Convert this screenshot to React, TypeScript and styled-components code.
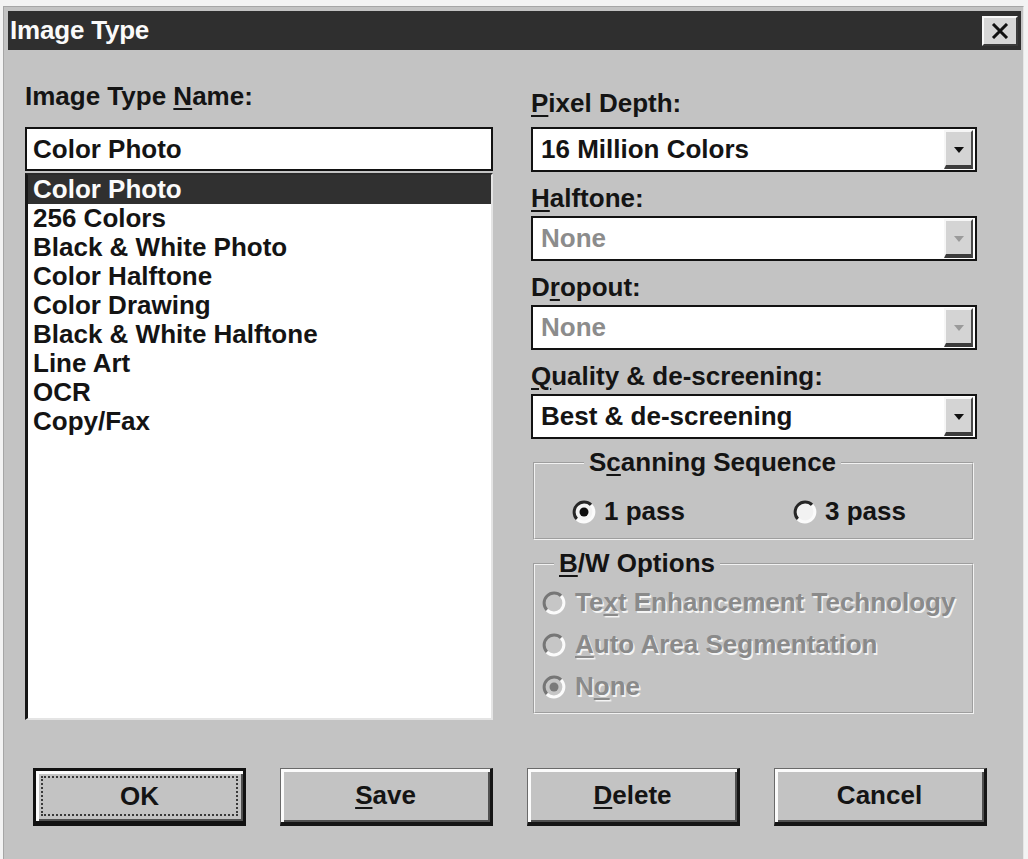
import React from "react";
import styled, { createGlobalStyle } from "styled-components";

const Global = createGlobalStyle`
  html, body { margin: 0; padding: 0; background: #f3f3f3; }
  body {
    font-family: "Liberation Sans", Arial, Helvetica, sans-serif;
    font-weight: 700;
    color: #141414;
    overflow: hidden;
  }
  * { box-sizing: border-box; }
`;

const FS = "26px";

const Window = styled.div`
  margin: 6px 4px 0 3px;
  height: 853px;
  border-left: 1px solid #a6a6a6;
  border-top: 1px solid #a6a6a6;
  border-right: 1px solid #e6e6e6;
  background: #c3c3c3;
  padding: 4px 2px 0 4px;
  display: flex;
  flex-direction: column;
`;

const TitleBar = styled.div`
  height: 39px;
  background: #2f2f2f;
  color: #fafafa;
  display: flex;
  align-items: center;
  justify-content: space-between;
  padding-left: 2px;
  font-size: 26px;
  letter-spacing: -0.2px;
`;

const CloseButton = styled.div`
  width: 36px;
  height: 30px;
  margin-right: 3px;
  background: #d6d6d6;
  border: 2px solid;
  border-color: #f7f7f7 #3a3a3a #3a3a3a #f7f7f7;
  display: flex;
  align-items: center;
  justify-content: center;
`;

const Body = styled.div`
  display: grid;
  grid-template-columns: 468px 446px;
  column-gap: 38px;
  padding-left: 17px;
`;

const Column = styled.div`
  display: flex;
  flex-direction: column;
`;

const FieldLabel = styled.div<{ $pt: number; $pb: number }>`
  font-size: ${FS};
  line-height: 29px;
  padding-top: ${(p) => p.$pt}px;
  margin-bottom: ${(p) => p.$pb}px;
  white-space: nowrap;
`;

const Key = styled.span`
  text-decoration: underline;
  text-decoration-thickness: 2px;
  text-underline-offset: 3px;
`;

const TextField = styled.div`
  height: 44px;
  border: 2px solid #121212;
  background: #ffffff;
  padding-left: 6px;
  font-size: ${FS};
  line-height: 40px;
  white-space: nowrap;
`;

const ListBox = styled.ul`
  list-style: none;
  margin: 2px 0 0 0;
  padding: 0;
  height: 547px;
  background: #ffffff;
  border-left: 3px solid #161616;
  border-top: 2px solid #2a2a2a;
  border-right: 2px solid #e4e4e4;
  border-bottom: 2px solid #e4e4e4;
  overflow: hidden;
`;

const ListItem = styled.li<{ $selected?: boolean }>`
  height: 29px;
  line-height: 29px;
  padding-left: 5px;
  font-size: ${FS};
  white-space: nowrap;
  background: ${(p) => (p.$selected ? "#303030" : "transparent")};
  color: ${(p) => (p.$selected ? "#fbfbfb" : "#141414")};
`;

const Combo = styled.div`
  height: 45px;
  border: 2px solid #121212;
  background: #ffffff;
  display: flex;
  align-items: stretch;
`;

const ComboText = styled.div<{ $disabled?: boolean }>`
  flex: 1;
  padding-left: 8px;
  font-size: ${FS};
  line-height: 41px;
  white-space: nowrap;
  color: ${(p) => (p.$disabled ? "#8c8c8c" : "#141414")};
`;

const DropButton = styled.div`
  width: 29px;
  margin: 1px 2px 1px 0;
  background: #d4d4d4;
  border-top: 2px solid #f6f6f6;
  border-left: 2px solid #f6f6f6;
  border-right: 2px solid #4a4a4a;
  border-bottom: 4px solid #3c3c3c;
  display: flex;
  align-items: center;
  justify-content: center;
`;

const Arrow = styled.span<{ $disabled?: boolean }>`
  width: 0;
  height: 0;
  border-left: 5px solid transparent;
  border-right: 5px solid transparent;
  border-top: 6px solid ${(p) => (p.$disabled ? "#9a9a9a" : "#101010")};
  margin-top: 2px;
`;

const GroupBox = styled.fieldset<{ $mt: number; $pt: number; $pb: number; $pl: number }>`
  margin: ${(p) => p.$mt}px 3px 0 2px;
  padding: ${(p) => p.$pt}px 0 ${(p) => p.$pb}px ${(p) => p.$pl}px;
  border: 2px groove #f2f2f2;
  min-inline-size: 0;
`;

const Legend = styled.legend`
  margin-left: 12px;
  padding: 0 5px;
  font-size: ${FS};
  line-height: 29px;
  white-space: nowrap;
`;

const RadioPair = styled.div`
  display: grid;
  grid-template-columns: 221px auto;
`;

const RadioStack = styled.div`
  display: flex;
  flex-direction: column;
  gap: 13px;
`;

const RadioOption = styled.div<{ $disabled?: boolean; $gap: number }>`
  display: flex;
  align-items: center;
  gap: ${(p) => p.$gap}px;
  height: 29px;
  font-size: ${FS};
  white-space: nowrap;
  color: ${(p) => (p.$disabled ? "#8a8a8a" : "#141414")};
  text-shadow: ${(p) => (p.$disabled ? "1.5px 1.5px 0 #f4f4f4" : "none")};
`;

const RadioSvg = styled.svg`
  flex: none;
  display: block;
`;

const ButtonRow = styled.div`
  display: flex;
  gap: 34px;
  padding-left: 25px;
  margin-top: 48px;
`;

const DialogButton = styled.div<{ $default?: boolean }>`
  width: 213px;
  height: 58px;
  background: #c3c3c3;
  border: ${(p) => (p.$default ? "3px solid #111" : "1px solid #6a6a6a")};
  border-bottom: ${(p) => (p.$default ? "5px solid #111" : "4px solid #151515")};
  border-right: ${(p) => (p.$default ? "3px solid #111" : "3px solid #151515")};
  box-shadow: inset 3px 3px 0 #fbfbfb, inset -2px -2px 0 #505050;
  display: flex;
  padding: 5px;
`;

const ButtonFace = styled.span<{ $focus?: boolean }>`
  flex: 1;
  display: flex;
  align-items: center;
  justify-content: center;
  font-size: ${FS};
  border: 2px dotted ${(p) => (p.$focus ? "#3a3a3a" : "transparent")};
  white-space: nowrap;
`;

function Radio({ checked, disabled }: { checked?: boolean; disabled?: boolean }) {
  const dark = disabled ? "#767676" : "#262626";
  return (
    <RadioSvg width={24} height={24} viewBox="0 0 24 24">
      <circle cx={12} cy={12} r={10} fill={disabled ? "#c6c6c6" : "#f2f2f2"} />
      <path d="M4.93 19.07 A10 10 0 0 1 19.07 4.93" stroke={dark} strokeWidth={3} fill="none" />
      <path d="M19.07 4.93 A10 10 0 0 1 4.93 19.07" stroke="#fbfbfb" strokeWidth={3} fill="none" />
      {checked && <circle cx={12} cy={12} r={4.5} fill={disabled ? "#7a7a7a" : "#0c0c0c"} />}
    </RadioSvg>
  );
}

const items = [
  "Color Photo",
  "256 Colors",
  "Black & White Photo",
  "Color Halftone",
  "Color Drawing",
  "Black & White Halftone",
  "Line Art",
  "OCR",
  "Copy/Fax",
];

export default function App() {
  return (
    <>
      <Global />
      <Window>
        <TitleBar>
          <span>Image Type</span>
          <CloseButton>
            <svg width={18} height={16} viewBox="0 0 18 16">
              <path d="M2 1 L16 15 M16 1 L2 15" stroke="#111" strokeWidth={3} />
            </svg>
          </CloseButton>
        </TitleBar>
        <Body>
          <Column>
            <FieldLabel $pt={32} $pb={16}>
              Image Type <Key>N</Key>ame:
            </FieldLabel>
            <TextField>Color Photo</TextField>
            <ListBox>
              {items.map((it, i) => (
                <ListItem key={it} $selected={i === 0}>
                  {it}
                </ListItem>
              ))}
            </ListBox>
          </Column>
          <Column>
            <FieldLabel $pt={39} $pb={9}>
              <Key>P</Key>ixel Depth:
            </FieldLabel>
            <Combo>
              <ComboText>16 Million Colors</ComboText>
              <DropButton>
                <Arrow />
              </DropButton>
            </Combo>
            <FieldLabel $pt={12} $pb={3}>
              <Key>H</Key>alftone:
            </FieldLabel>
            <Combo>
              <ComboText $disabled>None</ComboText>
              <DropButton>
                <Arrow $disabled />
              </DropButton>
            </Combo>
            <FieldLabel $pt={12} $pb={3}>
              D<Key>r</Key>opout:
            </FieldLabel>
            <Combo>
              <ComboText $disabled>None</ComboText>
              <DropButton>
                <Arrow $disabled />
              </DropButton>
            </Combo>
            <FieldLabel $pt={12} $pb={3}>
              <Key>Q</Key>uality &amp; de-screening:
            </FieldLabel>
            <Combo>
              <ComboText>Best &amp; de-screening</ComboText>
              <DropButton>
                <Arrow />
              </DropButton>
            </Combo>
            <GroupBox $mt={9} $pt={20} $pb={12} $pl={37}>
              <Legend>
                S<Key>c</Key>anning Sequence
              </Legend>
              <RadioPair>
                <RadioOption $gap={8}>
                  <Radio checked />
                  1 pass
                </RadioOption>
                <RadioOption $gap={8}>
                  <Radio />
                  3 pass
                </RadioOption>
              </RadioPair>
            </GroupBox>
            <GroupBox $mt={9} $pt={10} $pb={11} $pl={7}>
              <Legend>
                <Key>B</Key>/W Options
              </Legend>
              <RadioStack>
                <RadioOption $disabled $gap={9}>
                  <Radio disabled />
                  <span>
                    Te<Key>x</Key>t Enhancement Technology
                  </span>
                </RadioOption>
                <RadioOption $disabled $gap={9}>
                  <Radio disabled />
                  <span>
                    <Key>A</Key>uto Area Segmentation
                  </span>
                </RadioOption>
                <RadioOption $disabled $gap={9}>
                  <Radio disabled checked />
                  <span>
                    N<Key>o</Key>ne
                  </span>
                </RadioOption>
              </RadioStack>
            </GroupBox>
          </Column>
        </Body>
        <ButtonRow>
          <DialogButton $default>
            <ButtonFace $focus>OK</ButtonFace>
          </DialogButton>
          <DialogButton>
            <ButtonFace>
              <Key>S</Key>ave
            </ButtonFace>
          </DialogButton>
          <DialogButton>
            <ButtonFace>
              <Key>D</Key>elete
            </ButtonFace>
          </DialogButton>
          <DialogButton>
            <ButtonFace>Cancel</ButtonFace>
          </DialogButton>
        </ButtonRow>
      </Window>
    </>
  );
}
